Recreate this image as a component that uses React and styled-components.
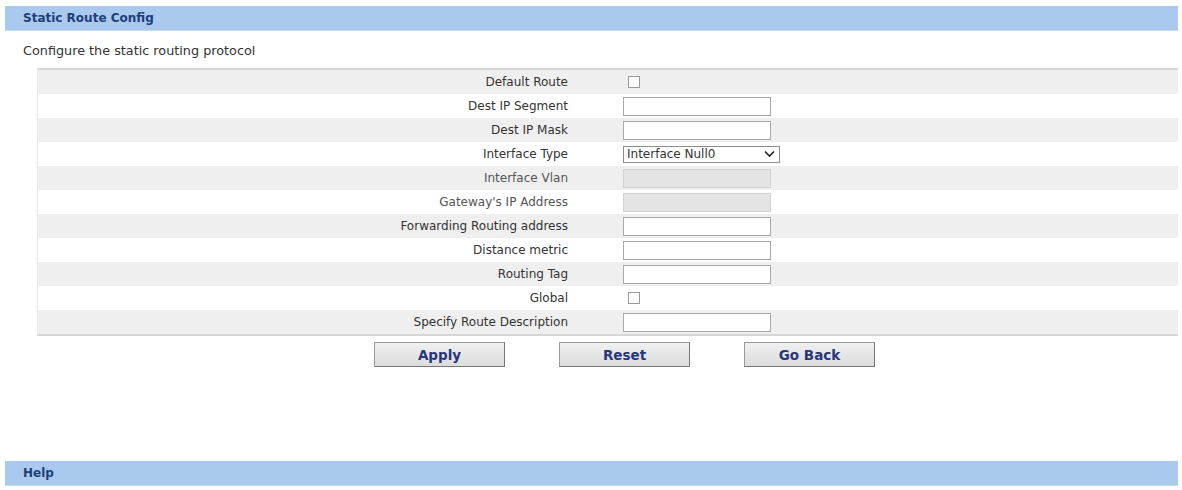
import React from "react";
import styled, { createGlobalStyle } from "styled-components";

const Global = createGlobalStyle`
  html, body { margin: 0; padding: 0; background: #fff; }
  body { font-family: "DejaVu Sans", Verdana, sans-serif; font-size: 12px; color: #333; }
`;

const Page = styled.div`
  padding: 6px 4px 0 5px;
  display: flex;
  flex-direction: column;
`;

const Bar = styled.div`
  height: 25px;
  background: #a9c9ee;
  border-bottom: 1px solid #c4daf3;
  box-sizing: border-box;
  display: flex;
  align-items: center;
  padding-left: 18px;
  font-weight: bold;
  font-size: 12px;
  color: #1e3f78;
`;

const Section = styled.div`
  display: flex;
  flex-direction: column;
  padding: 0 0 0 18px;
`;

const Desc = styled.div`
  height: 36px;
  display: flex;
  align-items: center;
  padding-top: 1px;
  font-size: 12.8px;
  color: #333;
`;

const Table = styled.div`
  margin-left: 14px;
  border-top: 2px solid #d6d6d6;
  border-bottom: 2px solid #d6d6d6;
  border-left: 1px solid #ececec;
  display: flex;
  flex-direction: column;
`;

const Row = styled.div`
  height: 24px;
  display: grid;
  grid-template-columns: 530px 1fr;
  align-items: center;
  background: ${(p) => (p.$alt ? "#efefef" : "#ffffff")};
`;

const Label = styled.div`
  text-align: right;
  color: ${(p) => (p.$dim ? "#555" : "#333")};
`;

const Cell = styled.div`
  padding-left: 55px;
  display: flex;
  align-items: center;
`;

const Input = styled.input`
  box-sizing: border-box;
  width: 148px;
  height: 19px;
  border: 1px solid ${(p) => (p.disabled ? "#d2d2d2" : "#a8a8a8")};
  background: ${(p) => (p.disabled ? "#e4e4e4" : "#fff")};
  margin: 0;
  padding: 0 3px;
  font-family: inherit;
  font-size: 12px;
`;

const Check = styled.span`
  display: inline-block;
  box-sizing: border-box;
  width: 12px;
  height: 12px;
  border: 1px solid #9a9a9a;
  background: #fff;
  margin-left: 5px;
`;

const Select = styled.div`
  box-sizing: border-box;
  width: 157px;
  height: 17px;
  border: 1px solid #8c8c8c;
  background: #fff;
  display: flex;
  align-items: center;
  justify-content: space-between;
  padding: 0 4px 0 3px;
  font-size: 12px;
  color: #333;
`;

const Buttons = styled.div`
  display: flex;
  justify-content: center;
  gap: 54px;
  padding: 6px 0 0 0;
  margin-left: 48px;
`;

const Button = styled.button`
  box-sizing: border-box;
  width: 131px;
  height: 25px;
  font-family: inherit;
  font-weight: bold;
  font-size: 13.5px;
  color: #28367e;
  background: linear-gradient(#f0f0f0, #dcdcdc);
  border: 1px solid #9a9a9a;
  border-right-color: #777;
  border-bottom-color: #777;
  padding: 0;
`;

const Spacer = styled.div`
  height: 94px;
`;

const rows = [
  { label: "Default Route", type: "check" },
  { label: "Dest IP Segment", type: "text" },
  { label: "Dest IP Mask", type: "text" },
  { label: "Interface Type", type: "select" },
  { label: "Interface Vlan", type: "disabled" },
  { label: "Gateway's IP Address", type: "disabled" },
  { label: "Forwarding Routing address", type: "text" },
  { label: "Distance metric", type: "text" },
  { label: "Routing Tag", type: "text" },
  { label: "Global", type: "check" },
  { label: "Specify Route Description", type: "text" },
];

function Field({ type }) {
  if (type === "check") return <Check />;
  if (type === "select")
    return (
      <Select>
        <span>Interface Null0</span>
        <svg width="11" height="8" viewBox="0 0 11 8">
          <path d="M1 1.5 L5.5 6 L10 1.5" fill="none" stroke="#222" strokeWidth="1.6" />
        </svg>
      </Select>
    );
  return <Input type="text" disabled={type === "disabled"} readOnly />;
}

export default function App() {
  return (
    <>
      <Global />
      <Page>
        <Bar>Static Route Config</Bar>
        <Section>
          <Desc>Configure the static routing protocol</Desc>
          <Table>
            {rows.map((r, i) => (
              <Row key={r.label} $alt={i % 2 === 0}>
                <Label $dim={r.type === "disabled"}>{r.label}</Label>
                <Cell>
                  <Field type={r.type} />
                </Cell>
              </Row>
            ))}
          </Table>
          <Buttons>
            <Button>Apply</Button>
            <Button>Reset</Button>
            <Button>Go Back</Button>
          </Buttons>
        </Section>
        <Spacer />
        <Bar>Help</Bar>
      </Page>
    </>
  );
}
